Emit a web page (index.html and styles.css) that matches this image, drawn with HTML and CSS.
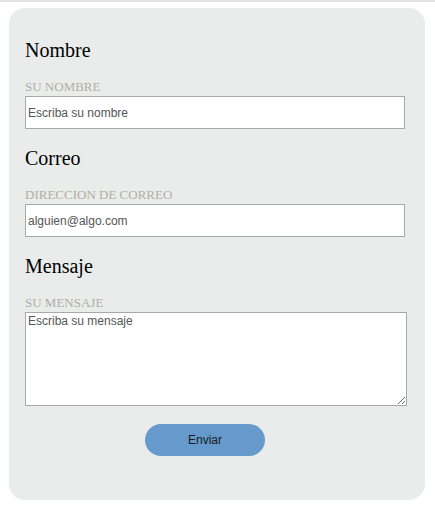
FILE: index.html
```html
<!DOCTYPE html>
<html lang="es">
<head>
<meta charset="utf-8">
<title>Contacto</title>
<link rel="stylesheet" href="styles.css">
</head>
<body>
<div class="topline"></div>
<form class="card">
  <h2 class="heading">Nombre</h2>
  <label class="label" for="nombre">SU NOMBRE</label>
  <input class="field" id="nombre" type="text" placeholder="Escriba su nombre">

  <h2 class="heading">Correo</h2>
  <label class="label" for="correo">DIRECCION DE CORREO</label>
  <input class="field" id="correo" type="email" placeholder="alguien@algo.com">

  <h2 class="heading">Mensaje</h2>
  <label class="label" for="mensaje">SU MENSAJE</label>
  <textarea class="area" id="mensaje" placeholder="Escriba su mensaje"></textarea>

  <div class="actions">
    <button class="send" type="button">Enviar</button>
  </div>
</form>
</body>
</html>
```

FILE: styles.css
```css
html, body {
  margin: 0;
  padding: 0;
  background: #ffffff;
}

.topline {
  height: 2px;
  background: #e2e2e2;
}

.card {
  box-sizing: border-box;
  width: 416px;
  margin: 6px 0 0 9px;
  padding: 30px 16px 44px 16px;
  background: #e9eceb;
  border-radius: 16px;
  display: flex;
  flex-direction: column;
  align-items: flex-start;
}

.heading {
  margin: 0;
  font-family: "Liberation Serif", "Times New Roman", serif;
  font-weight: normal;
  font-size: 20px;
  line-height: 24px;
  color: #000;
}

.heading + .label {
  margin-top: 17px;
}

.label {
  font-family: "Liberation Serif", "Times New Roman", serif;
  font-size: 13px;
  line-height: 16px;
  color: #b3aca4;
  margin-bottom: 1px;
}

.field {
  box-sizing: border-box;
  width: 380px;
  height: 33px;
  margin: 0 0 17px 0;
  padding: 1px 2px;
  border: 1px solid #a9a9a9;
  background: #fff;
  font-family: "Liberation Sans", Arial, sans-serif;
  font-size: 12px;
  color: #555;
  outline: none;
}

.field::placeholder,
.area::placeholder {
  color: #555;
  opacity: 1;
}

.area {
  box-sizing: border-box;
  width: 382px;
  height: 94px;
  margin: 0;
  padding: 1px 2px;
  border: 1px solid #a9a9a9;
  background: #fff;
  font-family: "Liberation Sans", Arial, sans-serif;
  font-size: 12px;
  line-height: 14px;
  color: #555;
  resize: both;
  outline: none;
}

.actions {
  align-self: stretch;
  display: flex;
  justify-content: flex-start;
  padding-left: 120px;
  margin-top: 18px;
}

.send {
  width: 120px;
  height: 32px;
  border: none;
  border-radius: 16px;
  background: #6699cc;
  color: #1a1a1a;
  font-family: "Liberation Sans", Arial, sans-serif;
  font-size: 12px;
  padding: 0;
  cursor: pointer;
}
```
